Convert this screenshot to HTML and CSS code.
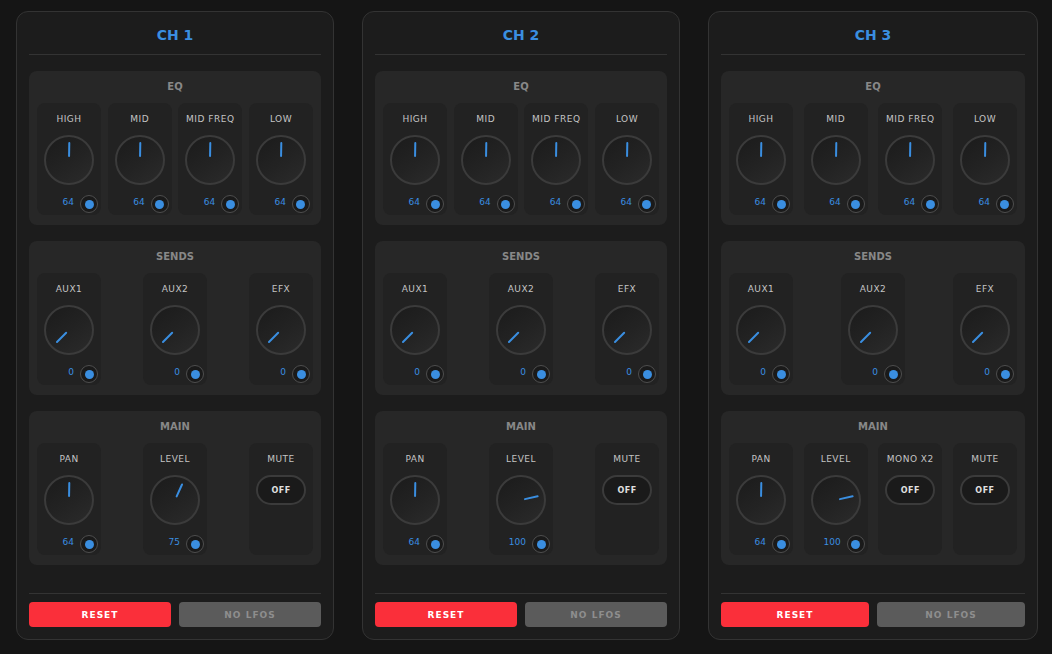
FILE: index.html
```html
<!DOCTYPE html>
<html>
<head>
<meta charset="utf-8">
<link rel="stylesheet" href="styles.css">
</head>
<body>
<div class="mixer">

  <div class="channel">
    <div class="ch-head"><div class="ch-title">CH 1</div></div>
    <div class="section">
      <div class="sec-title">EQ</div>
      <div class="cells">
        <div class="cell"><div class="lbl">HIGH</div><div class="knob"><div class="ind" style="transform:rotate(1deg)"></div></div><div class="val-row"><span class="val">64</span><span class="lfo"><span class="dot"></span></span></div></div>
        <div class="cell"><div class="lbl">MID</div><div class="knob"><div class="ind" style="transform:rotate(1deg)"></div></div><div class="val-row"><span class="val">64</span><span class="lfo"><span class="dot"></span></span></div></div>
        <div class="cell"><div class="lbl">MID FREQ</div><div class="knob"><div class="ind" style="transform:rotate(1deg)"></div></div><div class="val-row"><span class="val">64</span><span class="lfo"><span class="dot"></span></span></div></div>
        <div class="cell"><div class="lbl">LOW</div><div class="knob"><div class="ind" style="transform:rotate(1deg)"></div></div><div class="val-row"><span class="val">64</span><span class="lfo"><span class="dot"></span></span></div></div>
      </div>
    </div>
    <div class="section">
      <div class="sec-title">SENDS</div>
      <div class="cells">
        <div class="cell"><div class="lbl">AUX1</div><div class="knob"><div class="ind" style="transform:rotate(-135deg)"></div></div><div class="val-row"><span class="val">0</span><span class="lfo"><span class="dot"></span></span></div></div>
        <div class="cell"><div class="lbl">AUX2</div><div class="knob"><div class="ind" style="transform:rotate(-135deg)"></div></div><div class="val-row"><span class="val">0</span><span class="lfo"><span class="dot"></span></span></div></div>
        <div class="cell"><div class="lbl">EFX</div><div class="knob"><div class="ind" style="transform:rotate(-135deg)"></div></div><div class="val-row"><span class="val">0</span><span class="lfo"><span class="dot"></span></span></div></div>
      </div>
    </div>
    <div class="section">
      <div class="sec-title">MAIN</div>
      <div class="cells">
        <div class="cell"><div class="lbl">PAN</div><div class="knob"><div class="ind" style="transform:rotate(1deg)"></div></div><div class="val-row"><span class="val">64</span><span class="lfo"><span class="dot"></span></span></div></div>
        <div class="cell"><div class="lbl">LEVEL</div><div class="knob"><div class="ind" style="transform:rotate(24.4deg)"></div></div><div class="val-row"><span class="val">75</span><span class="lfo"><span class="dot"></span></span></div></div>
        <div class="cell"><div class="lbl">MUTE</div><div class="toggle">OFF</div></div>
      </div>
    </div>
    <div class="ch-foot">
      <button class="btn btn-reset">RESET</button>
      <button class="btn btn-lfo">NO LFOS</button>
    </div>
  </div>

  <div class="channel">
    <div class="ch-head"><div class="ch-title">CH 2</div></div>
    <div class="section">
      <div class="sec-title">EQ</div>
      <div class="cells">
        <div class="cell"><div class="lbl">HIGH</div><div class="knob"><div class="ind" style="transform:rotate(1deg)"></div></div><div class="val-row"><span class="val">64</span><span class="lfo"><span class="dot"></span></span></div></div>
        <div class="cell"><div class="lbl">MID</div><div class="knob"><div class="ind" style="transform:rotate(1deg)"></div></div><div class="val-row"><span class="val">64</span><span class="lfo"><span class="dot"></span></span></div></div>
        <div class="cell"><div class="lbl">MID FREQ</div><div class="knob"><div class="ind" style="transform:rotate(1deg)"></div></div><div class="val-row"><span class="val">64</span><span class="lfo"><span class="dot"></span></span></div></div>
        <div class="cell"><div class="lbl">LOW</div><div class="knob"><div class="ind" style="transform:rotate(1deg)"></div></div><div class="val-row"><span class="val">64</span><span class="lfo"><span class="dot"></span></span></div></div>
      </div>
    </div>
    <div class="section">
      <div class="sec-title">SENDS</div>
      <div class="cells">
        <div class="cell"><div class="lbl">AUX1</div><div class="knob"><div class="ind" style="transform:rotate(-135deg)"></div></div><div class="val-row"><span class="val">0</span><span class="lfo"><span class="dot"></span></span></div></div>
        <div class="cell"><div class="lbl">AUX2</div><div class="knob"><div class="ind" style="transform:rotate(-135deg)"></div></div><div class="val-row"><span class="val">0</span><span class="lfo"><span class="dot"></span></span></div></div>
        <div class="cell"><div class="lbl">EFX</div><div class="knob"><div class="ind" style="transform:rotate(-135deg)"></div></div><div class="val-row"><span class="val">0</span><span class="lfo"><span class="dot"></span></span></div></div>
      </div>
    </div>
    <div class="section">
      <div class="sec-title">MAIN</div>
      <div class="cells">
        <div class="cell"><div class="lbl">PAN</div><div class="knob"><div class="ind" style="transform:rotate(1deg)"></div></div><div class="val-row"><span class="val">64</span><span class="lfo"><span class="dot"></span></span></div></div>
        <div class="cell"><div class="lbl">LEVEL</div><div class="knob"><div class="ind" style="transform:rotate(77.6deg)"></div></div><div class="val-row"><span class="val">100</span><span class="lfo"><span class="dot"></span></span></div></div>
        <div class="cell"><div class="lbl">MUTE</div><div class="toggle">OFF</div></div>
      </div>
    </div>
    <div class="ch-foot">
      <button class="btn btn-reset">RESET</button>
      <button class="btn btn-lfo">NO LFOS</button>
    </div>
  </div>

  <div class="channel channel-wide">
    <div class="ch-head"><div class="ch-title">CH 3</div></div>
    <div class="section">
      <div class="sec-title">EQ</div>
      <div class="cells">
        <div class="cell"><div class="lbl">HIGH</div><div class="knob"><div class="ind" style="transform:rotate(1deg)"></div></div><div class="val-row"><span class="val">64</span><span class="lfo"><span class="dot"></span></span></div></div>
        <div class="cell"><div class="lbl">MID</div><div class="knob"><div class="ind" style="transform:rotate(1deg)"></div></div><div class="val-row"><span class="val">64</span><span class="lfo"><span class="dot"></span></span></div></div>
        <div class="cell"><div class="lbl">MID FREQ</div><div class="knob"><div class="ind" style="transform:rotate(1deg)"></div></div><div class="val-row"><span class="val">64</span><span class="lfo"><span class="dot"></span></span></div></div>
        <div class="cell"><div class="lbl">LOW</div><div class="knob"><div class="ind" style="transform:rotate(1deg)"></div></div><div class="val-row"><span class="val">64</span><span class="lfo"><span class="dot"></span></span></div></div>
      </div>
    </div>
    <div class="section">
      <div class="sec-title">SENDS</div>
      <div class="cells">
        <div class="cell"><div class="lbl">AUX1</div><div class="knob"><div class="ind" style="transform:rotate(-135deg)"></div></div><div class="val-row"><span class="val">0</span><span class="lfo"><span class="dot"></span></span></div></div>
        <div class="cell"><div class="lbl">AUX2</div><div class="knob"><div class="ind" style="transform:rotate(-135deg)"></div></div><div class="val-row"><span class="val">0</span><span class="lfo"><span class="dot"></span></span></div></div>
        <div class="cell"><div class="lbl">EFX</div><div class="knob"><div class="ind" style="transform:rotate(-135deg)"></div></div><div class="val-row"><span class="val">0</span><span class="lfo"><span class="dot"></span></span></div></div>
      </div>
    </div>
    <div class="section">
      <div class="sec-title">MAIN</div>
      <div class="cells">
        <div class="cell"><div class="lbl">PAN</div><div class="knob"><div class="ind" style="transform:rotate(1deg)"></div></div><div class="val-row"><span class="val">64</span><span class="lfo"><span class="dot"></span></span></div></div>
        <div class="cell"><div class="lbl">LEVEL</div><div class="knob"><div class="ind" style="transform:rotate(77.6deg)"></div></div><div class="val-row"><span class="val">100</span><span class="lfo"><span class="dot"></span></span></div></div>
        <div class="cell"><div class="lbl">MONO X2</div><div class="toggle">OFF</div></div>
        <div class="cell"><div class="lbl">MUTE</div><div class="toggle">OFF</div></div>
      </div>
    </div>
    <div class="ch-foot">
      <button class="btn btn-reset">RESET</button>
      <button class="btn btn-lfo">NO LFOS</button>
    </div>
  </div>

</div>
</body>
</html>
```

FILE: styles.css
```css
* { box-sizing: border-box; }
html, body { margin: 0; padding: 0; }
body {
  background: #151515;
  font-family: "DejaVu Sans", Verdana, sans-serif;
  color: #ccc;
}
.mixer {
  display: flex;
  gap: 28px;
  padding: 11px 16px;
  align-items: flex-start;
}
.channel {
  width: 318px;
  flex: none;
  background: #1c1c1c;
  border: 1px solid #333;
  border-radius: 12px;
  padding: 13px 12px 12px;
  display: flex;
  flex-direction: column;
}
.channel-wide { width: 330px; }
.ch-head {
  border-bottom: 1px solid #333;
  padding-bottom: 9px;
  margin-bottom: 16px;
  text-align: center;
}
.ch-title {
  color: #3a8ee0;
  font-weight: bold;
  font-size: 14px;
  line-height: 20px;
}
.section {
  background: #272727;
  border-radius: 8px;
  padding: 10px 8px 10px;
}
.section + .section { margin-top: 16px; }
.sec-title {
  text-align: center;
  font-size: 10px;
  line-height: 12px;
  font-weight: bold;
  color: #888;
  margin-bottom: 10px;
}
.cells {
  display: flex;
  justify-content: space-between;
  align-items: stretch;
}
.cell {
  width: 64px;
  background: #222;
  border-radius: 8px;
  padding: 10px 3px 2px;
  display: flex;
  flex-direction: column;
  align-items: center;
}
.lbl {
  font-size: 9px;
  line-height: 12px;
  letter-spacing: 0.5px;
  color: #c4c4c4;
  white-space: nowrap;
  margin-bottom: 10px;
}
.knob {
  position: relative;
  width: 50px;
  height: 50px;
  border-radius: 50%;
  border: 2px solid #3b3b3b;
  background: linear-gradient(145deg, #1b1b1b 0%, #232323 55%, #2b2b2b 100%);
  margin-bottom: 10px;
}
.ind {
  position: absolute;
  inset: 0;
}
.ind::after {
  content: "";
  position: absolute;
  left: 50%;
  top: 5px;
  width: 2px;
  height: 15px;
  margin-left: -1px;
  background: #3a8ee0;
  border-radius: 1px;
}
.val-row {
  align-self: stretch;
  display: flex;
  justify-content: flex-end;
  align-items: center;
  gap: 6px;
}
.val {
  font-size: 9px;
  color: #3a8ee0;
  line-height: 12px;
  margin-top: -4px;
}
.lfo {
  width: 18px;
  height: 18px;
  border-radius: 50%;
  border: 1px solid #4e4e4e;
  background: #1a1a1a;
  display: flex;
  align-items: center;
  justify-content: center;
}
.dot {
  width: 9px;
  height: 9px;
  border-radius: 50%;
  background: #3a8ee0;
}
.toggle {
  width: 50px;
  height: 30px;
  border-radius: 15px;
  border: 2px solid #3b3b3b;
  background: #1a1a1a;
  color: #e0e0e0;
  font-size: 8px;
  font-weight: bold;
  letter-spacing: 0.5px;
  display: flex;
  align-items: center;
  justify-content: center;
}
.ch-foot {
  margin-top: 28px;
  border-top: 1px solid #333;
  padding-top: 8px;
  display: flex;
  gap: 8px;
}
.btn {
  flex: 1;
  height: 25px;
  border: none;
  border-radius: 4px;
  font-family: "DejaVu Sans", Verdana, sans-serif;
  font-size: 9px;
  font-weight: bold;
  letter-spacing: 1px;
  padding: 0;
}
.btn-reset { background: #fa2f3a; color: #fff; }
.btn-lfo { background: #5b5b5b; color: #8e8e8e; }
```
